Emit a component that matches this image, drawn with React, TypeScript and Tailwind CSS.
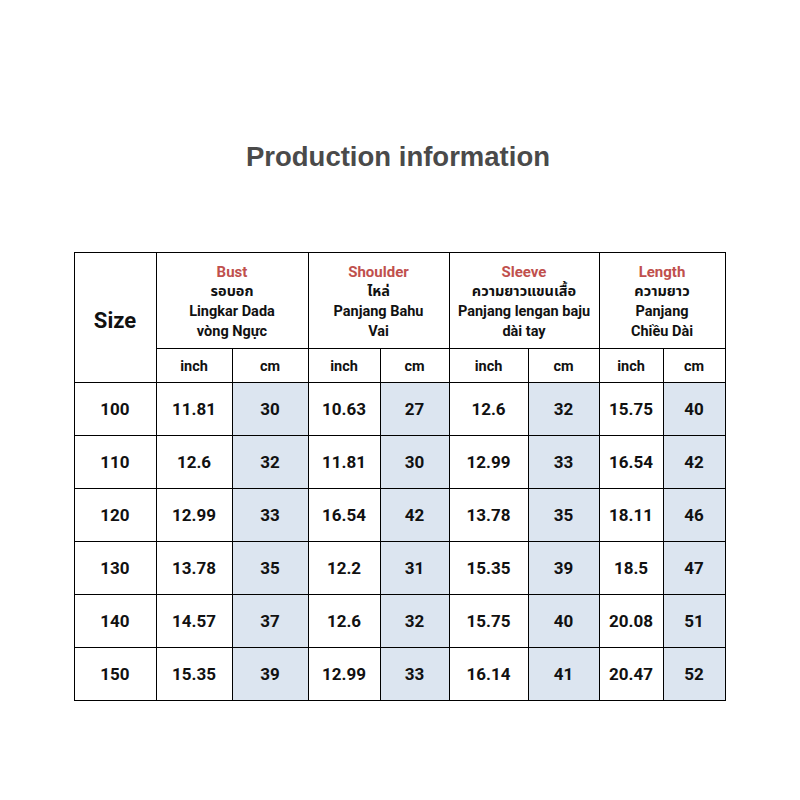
const columns = [
  { en: 'Bust', th: 'รอบอก', lines: ['Lingkar Dada', 'vòng Ngực'] },
  { en: 'Shoulder', th: 'ไหล่', lines: ['Panjang Bahu', 'Vai'] },
  { en: 'Sleeve', th: 'ความยาวแขนเสื้อ', lines: ['Panjang lengan baju', 'dài tay'] },
  { en: 'Length', th: 'ความยาว', lines: ['Panjang', 'Chiều Dài'] },
];

const rows = [
  ['100', '11.81', '30', '10.63', '27', '12.6', '32', '15.75', '40'],
  ['110', '12.6', '32', '11.81', '30', '12.99', '33', '16.54', '42'],
  ['120', '12.99', '33', '16.54', '42', '13.78', '35', '18.11', '46'],
  ['130', '13.78', '35', '12.2', '31', '15.35', '39', '18.5', '47'],
  ['140', '14.57', '37', '12.6', '32', '15.75', '40', '20.08', '51'],
  ['150', '15.35', '39', '12.99', '33', '16.14', '41', '20.47', '52'],
];

export default function App() {
  return (
    <div className="w-[800px] h-[800px] bg-white flex flex-col items-center" style={{ fontFamily: 'Roboto, "Noto Sans", sans-serif' }}>
      <h1 className="mt-[139px] ml-[-4px] text-[27.5px] leading-[36px] text-[#4a4a4a] font-bold font-['Liberation_Sans',Arial,sans-serif]">
        Production information
      </h1>

      <div className="mt-[77px] ml-[-1px] grid grid-cols-[81px_75px_75px_71px_68px_78px_70px_63px_61px] grid-rows-[95px_33px_repeat(6,52px)] gap-px p-px bg-black text-[#111111] font-bold">
        <div className="row-span-2 bg-white flex items-center justify-center text-[22px] pt-[5px]">Size</div>
        {columns.map((c) => (
          <div key={c.en} className="col-span-2 bg-white flex flex-col items-center justify-center text-[14.5px] leading-[20px] text-center pt-[2px]">
            <span className="text-[#c0504d] text-[15px]">{c.en}</span>
            <span className="font-['Noto_Sans_Thai','Noto_Sans',sans-serif]">{c.th}</span>
            {c.lines.map((l) => (
              <span key={l}>{l}</span>
            ))}
          </div>
        ))}
        {columns.map((c) => [
          <div key={c.en + 'i'} className="bg-white flex items-center justify-center text-[14.5px] pt-[2px]">inch</div>,
          <div key={c.en + 'c'} className="bg-white flex items-center justify-center text-[14.5px] pt-[2px]">cm</div>,
        ])}
        {rows.map((r) =>
          r.map((v, i) => (
            <div
              key={r[0] + '-' + i}
              className={`${i > 0 && i % 2 === 0 ? 'bg-[#dce5f0]' : 'bg-white'} flex items-center justify-center text-[17px] pt-[2px]`}
            >
              {v}
            </div>
          ))
        )}
      </div>
    </div>
  );
}
